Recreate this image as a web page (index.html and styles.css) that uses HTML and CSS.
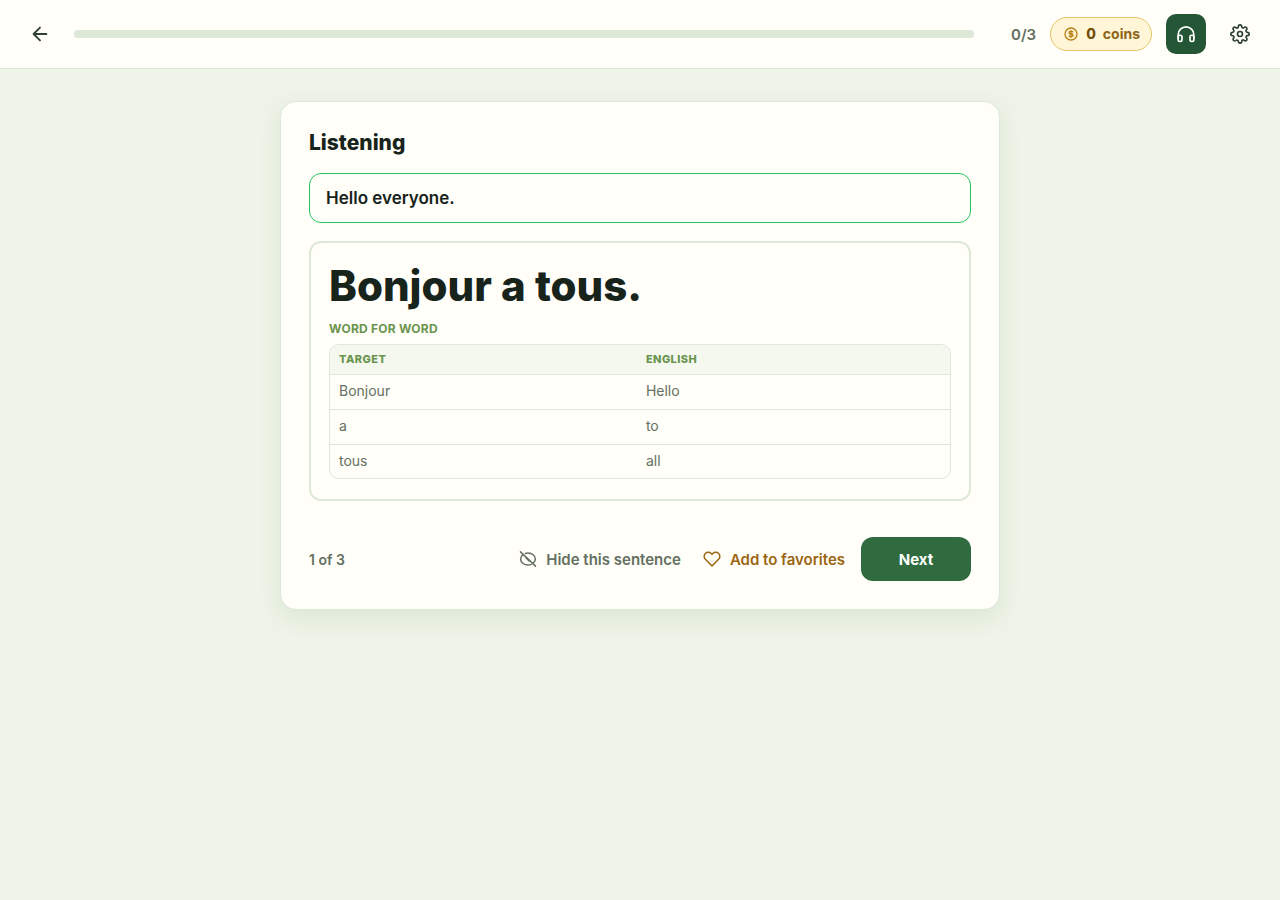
FILE: index.html
```
<!DOCTYPE html>
<html lang="en">
<head>
    <meta charset="UTF-8">
    <meta name="viewport" content="width=device-width, initial-scale=1.0">
    <title>Listening</title>
    <link rel="stylesheet" href="styles.css">
</head>
<body>
    <header class="topbar">
        <button type="button" class="icon-btn" aria-label="Back">
            <svg class="icon icon-lg" viewBox="0 0 24 24"><path d="M19 12H5M12 19l-7-7 7-7"/></svg>
        </button>
        <div class="progress" role="progressbar" aria-label="Progress" aria-valuemin="0" aria-valuemax="3" aria-valuenow="0"></div>
        <span class="count">0/3</span>
        <div class="coins">
            <svg class="icon icon-coin" viewBox="0 0 24 24">
                <circle cx="12" cy="12" r="9"/>
                <path d="M14.8 9a2 2 0 0 0-1.8-1h-2a2 2 0 1 0 0 4h2a2 2 0 1 1 0 4h-2a2 2 0 0 1-1.8-1M12 7v10"/>
            </svg>
            <strong>0</strong>
            <span>coins</span>
        </div>
        <button type="button" class="icon-btn active" aria-label="Listening mode">
            <svg class="icon" viewBox="0 0 24 24">
                <path d="M2.6 17v-4.2a9.4 9.4 0 0 1 18.8 0V17"/>
                <rect x="2.6" y="13.5" width="4.6" height="7.5" rx="2"/>
                <rect x="16.8" y="13.5" width="4.6" height="7.5" rx="2"/>
            </svg>
        </button>
        <button type="button" class="icon-btn" aria-label="Settings">
            <svg class="icon" viewBox="0 0 24 24">
                <circle cx="12" cy="12" r="3"/>
                <path d="M19.4 15a1.65 1.65 0 0 0 .33 1.82l.06.06a2 2 0 0 1 0 2.83 2 2 0 0 1-2.83 0l-.06-.06a1.65 1.65 0 0 0-1.82-.33 1.65 1.65 0 0 0-1 1.51V21a2 2 0 0 1-2 2 2 2 0 0 1-2-2v-.09A1.65 1.65 0 0 0 9 19.4a1.65 1.65 0 0 0-1.82.33l-.06.06a2 2 0 0 1-2.83 0 2 2 0 0 1 0-2.83l.06-.06a1.65 1.65 0 0 0 .33-1.82 1.65 1.65 0 0 0-1.51-1H3a2 2 0 0 1-2-2 2 2 0 0 1 2-2h.09A1.65 1.65 0 0 0 4.6 9a1.65 1.65 0 0 0-.33-1.82l-.06-.06a2 2 0 0 1 0-2.83 2 2 0 0 1 2.83 0l.06.06a1.65 1.65 0 0 0 1.82.33H9a1.65 1.65 0 0 0 1-1.51V3a2 2 0 0 1 2-2 2 2 0 0 1 2 2v.09a1.65 1.65 0 0 0 1 1.51 1.65 1.65 0 0 0 1.82-.33l.06-.06a2 2 0 0 1 2.83 0 2 2 0 0 1 0 2.83l-.06.06a1.65 1.65 0 0 0-.33 1.82V9a1.65 1.65 0 0 0 1.51 1H21a2 2 0 0 1 2 2 2 2 0 0 1-2 2h-.09a1.65 1.65 0 0 0-1.51 1z"/>
            </svg>
        </button>
    </header>

    <main class="page">
        <section class="card">
            <h1>Listening</h1>
            <p class="prompt">Hello everyone.</p>

            <div class="answer">
                <p class="sentence">Bonjour a tous.</p>
                <h2>Word for word</h2>
                <div class="table-wrap">
                    <table>
                        <thead>
                            <tr><th>Target</th><th>English</th></tr>
                        </thead>
                        <tbody>
                            <tr><td>Bonjour</td><td>Hello</td></tr>
                            <tr><td>a</td><td>to</td></tr>
                            <tr><td>tous</td><td>all</td></tr>
                        </tbody>
                    </table>
                </div>
            </div>

            <footer class="actions">
                <span class="step">1 of 3</span>
                <button type="button" class="text-btn">
                    <svg class="icon icon-sm" viewBox="0 0 24 24">
                        <path d="M2 2.5l20 19"/>
                        <path d="M8.5 4.6A10 10 0 0 1 12 4c5.600 0 9.800 3.600 9.800 8a7.500 7.500 0 0 1-2.400 5.200"/>
                        <path d="M5 6.400A7.500 7.500 0 0 0 2.200 12c0 4.400 4.200 8 9.800 8a12 12 0 0 0 4.500-.9"/>
                        <path d="M9.500 10.500l4 4"/>
                    </svg>
                    Hide this sentence
                </button>
                <button type="button" class="text-btn favorite">
                    <svg class="icon icon-sm" viewBox="0 0 24 24"><path d="M20.84 4.61a5.5 5.5 0 0 0-7.78 0L12 5.67l-1.06-1.06a5.5 5.5 0 0 0-7.78 7.78l1.06 1.06L12 21.23l7.78-7.78 1.06-1.06a5.5 5.5 0 0 0 0-7.78z"/></svg>
                    Add to favorites
                </button>
                <button type="button" class="next-btn">Next</button>
            </footer>
        </section>
    </main>
</body>
</html>
```
FILE: styles.css
```
* {
    box-sizing: border-box;
}
body {
    margin: 0;
    min-height: 100vh;
    background: #eef4e8;
    color: #17231b;
    font-family: Inter, "Liberation Sans", sans-serif;
}
h1, h2, p {
    margin: 0;
}
button {
    border: none;
    background: none;
    font-family: inherit;
    cursor: pointer;
}
.icon {
    width: 20px;
    height: 20px;
    flex: none;
    fill: none;
    stroke: currentColor;
    stroke-width: 2;
    stroke-linecap: round;
    stroke-linejoin: round;
}
.icon-lg {
    width: 22px;
    height: 22px;
}
.icon-sm {
    width: 18px;
    height: 18px;
}
.icon-coin {
    width: 16px;
    height: 16px;
    color: #b97f10;
}

.topbar {
    display: flex;
    align-items: center;
    gap: 14px;
    padding: 14px 20px;
    background: #fffef8;
    border-bottom: 1px solid #dde8d8;
}
.icon-btn {
    display: flex;
    align-items: center;
    justify-content: center;
    width: 40px;
    height: 40px;
    padding: 0;
    border-radius: 10px;
    color: #2f4034;
}
.icon-btn.active {
    background: #245635;
    color: #fff;
}
.progress {
    flex: 1;
    height: 8px;
    border-radius: 4px;
    background: #dde8d8;
}
.count {
    min-width: 48px;
    text-align: right;
    font-size: 15px;
    font-weight: 600;
    color: #647062;
}
.coins {
    display: flex;
    align-items: center;
    gap: 7px;
    height: 34px;
    padding: 0 11px 0 12px;
    border: 1px solid #e6c568;
    border-radius: 17px;
    background: #fff6d8;
    font-size: 14px;
    line-height: 16px;
    font-weight: 700;
    color: #8f6517;
}
.coins strong {
    font-weight: 800;
    color: #735008;
}

.page {
    padding: 32px 20px;
}
.card {
    max-width: 720px;
    margin: 0 auto;
    padding: 28px;
    border: 1px solid #dde8d8;
    border-radius: 16px;
    background: #fffef8;
    box-shadow: 0 8px 24px rgba(70, 120, 50, 0.1);
}
h1 {
    font-size: 21px;
    line-height: 26px;
    font-weight: 800;
}
.prompt {
    margin-top: 17px;
    padding: 12px 16px;
    border: 1px solid #22c55e;
    border-radius: 12px;
    font-size: 17px;
    line-height: 24px;
    font-weight: 600;
}
.answer {
    margin-top: 18px;
    padding: 18px;
    padding-bottom: 20px;
    border: 2px solid #dde8d8;
    border-radius: 12px;
}
.sentence {
    font-size: 42px;
    line-height: 50px;
    font-weight: 800;
}
h2, th {
    font-size: 11px;
    font-weight: 800;
    letter-spacing: 0.04em;
    text-transform: uppercase;
    color: #6b944f;
}
h2 {
    margin: 11px 0 8px;
    font-size: 12px;
    line-height: 14px;
    font-weight: 700;
    letter-spacing: 0.02em;
}
.table-wrap {
    overflow: hidden;
    border: 1px solid #dde8d8;
    border-radius: 10px;
}
table {
    width: 100%;
    table-layout: fixed;
    border-collapse: collapse;
}
th, td {
    padding: 8px 9px;
    text-align: left;
}
th {
    background: #f4f8ef;
    line-height: 13px;
}
th:first-child {
    width: 49.5%;
}
td {
    padding: 7px 9px 9px;
    border-top: 1px solid #dde8d8;
    font-size: 14px;
    line-height: 18px;
    color: #647062;
}
tr:last-child td {
    padding-bottom: 8px;
}

.actions {
    display: flex;
    align-items: center;
    gap: 10px;
    margin-top: 36px;
}
.step {
    margin-right: auto;
    font-size: 14px;
    font-weight: 600;
    color: #647062;
}
.text-btn {
    display: flex;
    align-items: center;
    gap: 9px;
    height: 44px;
    padding: 0 6px;
    font-size: 15px;
    font-weight: 600;
    color: #647062;
}
.text-btn.favorite {
    color: #9b6512;
}
.next-btn {
    min-width: 110px;
    height: 44px;
    border-radius: 12px;
    background: #2f6b3f;
    color: #fff;
    font-size: 15px;
    font-weight: 700;
}
```
